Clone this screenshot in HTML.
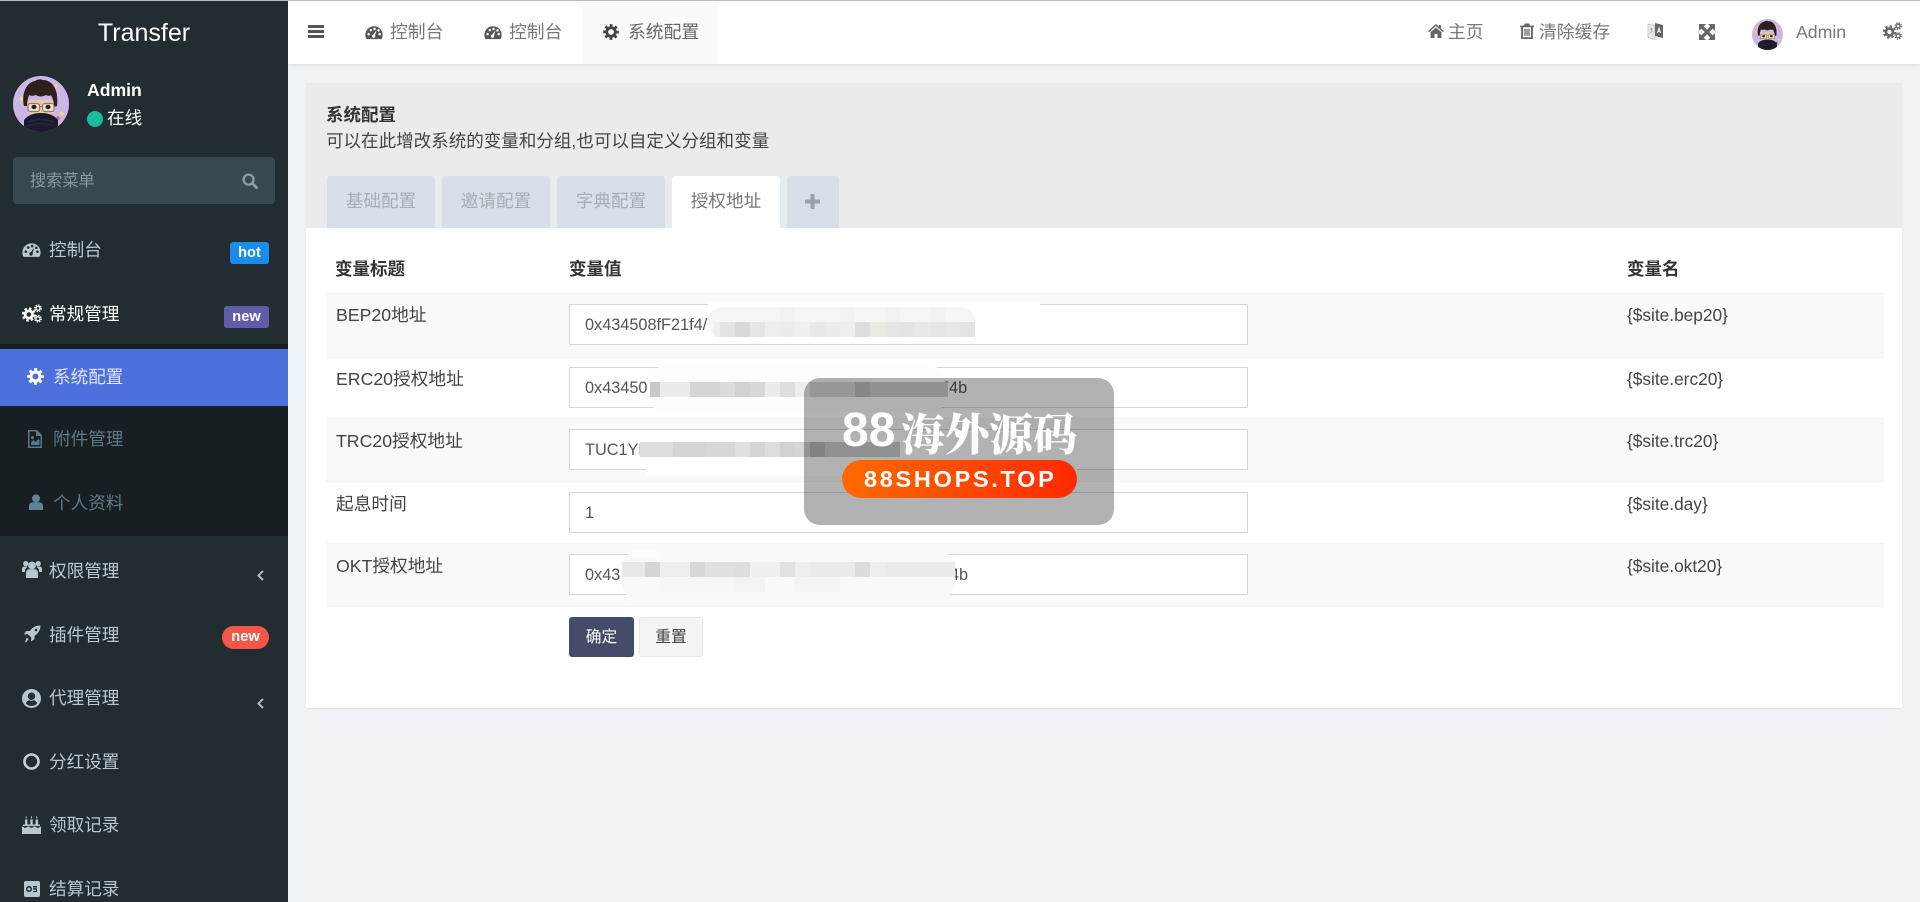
<!DOCTYPE html>
<html lang="zh-CN">
<head>
<meta charset="utf-8">
<title>系统配置</title>
<style>
html,body{margin:0;padding:0;width:1920px;height:902px;overflow:hidden;background:#f0f3f6}
body{position:relative;font-family:"Liberation Sans","Noto Sans CJK SC",sans-serif;font-size:17.5px;color:#444}
.a{position:absolute;display:block}
.t{position:absolute;white-space:nowrap;line-height:20px;height:20px}
.m{font-size:17.6px;color:#b8c7ce}
.s{font-size:17.5px}
svg.i{position:absolute;overflow:visible;fill:currentColor}
.b{position:absolute;color:#fff;font-weight:bold;font-size:14.6px;line-height:22px;height:22px;text-align:center;border-radius:3px}
.tab{position:absolute;top:176px;height:52px;width:108px;background:#d8dfe6;border-radius:3px 3px 0 0;color:#a6aeb4;line-height:51px;text-align:center;font-size:17.6px}
.row{position:absolute;left:326px;width:1558px}
.in{position:absolute;left:569px;width:679px;height:41px;box-sizing:border-box;border:1px solid #d2d6de;background:#fff}
.v{position:absolute;font-size:16.3px;color:#555;line-height:20px;white-space:nowrap}
</style>
</head>
<body>
<svg width="0" height="0" style="position:absolute">
<defs>
<symbol id="dash" viewBox="0 0 20 16"><path fill-rule="evenodd" d="M10 1a9.6 9.6 0 0 0-9.6 9.6c0 1.9.5 3.5 1.3 4.7h16.6c.8-1.2 1.3-2.8 1.3-4.7A9.6 9.6 0 0 0 10 1zM4 8.4a1.4 1.4 0 1 0 .01 0zM6.5 4a1.4 1.4 0 1 0 .01 0zM10.6 2.6a1.4 1.4 0 1 0 .01 0zM15 4.3a1.4 1.4 0 1 0 .01 0zM16.3 8.4a1.4 1.4 0 1 0 .01 0zM12.8 5.6l-3.6 4.6a1.9 1.9 0 1 0 2 1.1z"/></symbol>
<symbol id="gear" viewBox="0 0 20 20"><circle cx="10" cy="10" r="5.4" fill="none" stroke="currentColor" stroke-width="3.6"/><circle cx="10" cy="10" r="8.2" fill="none" stroke="currentColor" stroke-width="3.2" stroke-dasharray="3.4 3.03" stroke-dashoffset="1.7"/></symbol>
<symbol id="cogs" viewBox="0 0 20 18"><circle cx="6.800" cy="10" r="3.700" fill="none" stroke="currentColor" stroke-width="2.800"/><circle cx="6.800" cy="10" r="6" fill="none" stroke="currentColor" stroke-width="2.200" stroke-dasharray="2.500 2.210"/><circle cx="16" cy="3.800" r="2" fill="none" stroke="currentColor" stroke-width="1.300"/><circle cx="16" cy="3.800" r="3.300" fill="none" stroke="currentColor" stroke-width="1.200" stroke-dasharray="1.500 1.090"/><circle cx="16" cy="14.200" r="2" fill="none" stroke="currentColor" stroke-width="1.300"/><circle cx="16" cy="14.200" r="3.300" fill="none" stroke="currentColor" stroke-width="1.200" stroke-dasharray="1.500 1.090"/></symbol>
<symbol id="ava" viewBox="0 0 56 56">
<clipPath id="cc"><circle cx="28" cy="28" r="28"/></clipPath>
<g clip-path="url(#cc)">
<rect width="56" height="56" fill="#cbb6e6"/>
<path d="M7 22l2-2 1 2 2 1-2 1-1 3-1-3-2-1zM47 37l2-2 1 2 2 1-2 1-1 2-1-2-2-1zM42 9l1-1 1 1 1 1-1 1-1 1-1-1-1-1z" fill="#f4dc6a"/>
<path d="M44 40l3 1-1 3-3-1z" fill="#d85a80"/>
<path d="M14 24c0 13 5 20 14 20s14-7 14-20z" fill="#e9c8ac"/>
<path d="M11 30c-3-13 3-24 11-25 2-2 6-2 8-1 9 0 16 9 14 26l-3 1c0-5-1-8-3-12-1 1-3 1-5 0-4 2-7 2-10 0-3 1-5 1-7 0-1 3-2 7-2 11z" fill="#2a211c"/>
<rect x="15" y="27.500" width="11.500" height="8" rx="2.500" fill="#f1e3d2" stroke="#8d7a68" stroke-width="1.200"/>
<rect x="29.500" y="27.500" width="11.500" height="8" rx="2.500" fill="#f1e3d2" stroke="#8d7a68" stroke-width="1.200"/>
<path d="M26.500 30.500h3" stroke="#8d7a68" stroke-width="1"/>
<ellipse cx="21" cy="31" rx="2.600" ry="2.200" fill="#2e211a"/><ellipse cx="35" cy="31" rx="2.600" ry="2.200" fill="#2e211a"/>
<path d="M11 44c4-5 10-7 17-7s13 2 17 7v12H11z" fill="#1b1a2b"/>
<path d="M15 46c8-3 18-3 26 0M14 50c9-3 19-3 28 0" stroke="#2e2d44" stroke-width="1" fill="none"/>
</g></symbol>
</defs>
</svg>

<!-- header -->
<div class="a" style="left:288px;top:0;width:1632px;height:64px;background:#fff;box-shadow:0 1px 3px rgba(0,0,0,.1)"></div>
<div class="a" style="left:582px;top:4px;width:135px;height:60px;background:#fafafa"></div>

<!-- sidebar -->
<div class="a" style="left:0;top:0;width:288px;height:902px;background:#222d32"></div>
<div class="a" style="left:0;top:344px;width:288px;height:5px;background:#171e22"></div>
<div class="a" style="left:0;top:406px;width:288px;height:130px;background:#181f23"></div>
<div class="a" style="left:0;top:349px;width:288px;height:57px;background:#4e70dc"></div>
<div class="a" style="left:0;top:0;width:1920px;height:1px;background:#bcbcbc"></div>

<div class="t" style="left:0;width:288px;text-align:center;top:22px;height:22px;line-height:22px;font-size:25px;color:#fff">Transfer</div>
<svg class="i" style="left:13px;top:76px" width="56" height="56"><use href="#ava"/></svg>
<div class="t" style="left:87px;top:80px;font-weight:bold;font-size:17.6px;color:#fff">Admin</div>
<div class="a" style="left:87px;top:111px;width:16px;height:16px;border-radius:50%;background:#18bc9c"></div>
<div class="t" style="left:107px;top:108px;font-size:17.6px;color:#fff">在线</div>

<div class="a" style="left:13px;top:157px;width:262px;height:47px;border-radius:4px;background:#374850"></div>
<div class="t" style="left:30px;top:171px;font-size:16.2px;color:#8a979e">搜索菜单</div>
<svg class="i" style="left:242px;top:173px;color:#8f9ca3" width="16" height="16" viewBox="0 0 16 16"><circle cx="6.6" cy="6.6" r="5" fill="none" stroke="currentColor" stroke-width="2.3"/><path d="M10.4 10.4l4.2 4.2" stroke="currentColor" stroke-width="2.8" stroke-linecap="round"/></svg>

<svg class="i m" style="left:22px;top:242px;color:#b8c7ce" width="19" height="16"><use href="#dash"/></svg>
<div class="t m" style="left:49px;top:240px">控制台</div>
<div class="b" style="left:230px;top:242px;width:39px;background:#1a8ceb">hot</div>

<svg class="i" style="left:22px;top:304px;color:#fff" width="20" height="19"><use href="#cogs"/></svg>
<div class="t m" style="left:49px;top:304px;color:#fff">常规管理</div>
<div class="b" style="left:224px;top:306px;width:45px;background:#605ca8">new</div>

<svg class="i" style="left:27px;top:368px;color:#fff" width="17" height="17"><use href="#gear"/></svg>
<div class="t s" style="left:53px;top:367px;color:#dfe6f7;font-size:17.6px">系统配置</div>

<svg class="i" style="left:27px;top:430px;color:#5b7a89" width="16" height="18" viewBox="0 0 16 18"><path fill-rule="evenodd" d="M1 0h9l5 5v13H1zM2.5 1.5v15h11V6H9V1.5zM4 15v-2.5l2.5-2.5 2 2 3-3 1 1V15zM5.5 6a1.6 1.6 0 1 0 .01 0z"/></svg>
<div class="t" style="left:53px;top:429px;color:#5b7a89;font-size:17.6px">附件管理</div>

<svg class="i" style="left:29px;top:494px;color:#5f8396" width="14" height="16" viewBox="0 0 14 16"><circle cx="7" cy="4.4" r="4"/><path d="M0 16v-4c0-2.3 1.5-3.8 3.8-3.8h6.4c2.3 0 3.8 1.5 3.8 3.8v4z"/></svg>
<div class="t" style="left:53px;top:493px;color:#5b7a89;font-size:17.6px">个人资料</div>

<svg class="i" style="left:22px;top:560px;color:#b8c7ce" width="20" height="18" viewBox="0 0 20 18"><circle cx="10" cy="5.5" r="3.9"/><circle cx="3.8" cy="3.6" r="2.6"/><circle cx="16.2" cy="3.6" r="2.6"/><path d="M4 18v-5c0-2.5 1.4-3.8 3-3.8h6c1.600 0 3 1.300 3 3.800v5zM0 12V9c0-1.500 1-2.500 2.500-2.500h3L3 9.500V12zM20 12V9c0-1.500-1-2.500-2.500-2.500h-3l2.500 3V12z"/></svg>
<div class="t m" style="left:49px;top:561px">权限管理</div>
<svg class="i" style="left:257px;top:570px;color:#b8c7ce" width="7" height="11" viewBox="0 0 7 11"><path d="M6 1L1.500 5.500 6 10" fill="none" stroke="currentColor" stroke-width="1.900"/></svg>

<svg class="i" style="left:24px;top:625px;color:#b8c7ce" width="17" height="18" viewBox="0 0 17 18"><path fill-rule="evenodd" d="M16.500.5c-4.500 0-8 1.500-10.500 5.500H2L0 9.500l3.800-.4 3.500 3.500-.3 3.800 3.500-2.300V11c3.500-2.500 6-6 6-10.500zM12 3.800a1.300 1.300 0 1 0 .01 0z"/><path d="M2.800 12.500l1.800 1.800L2 17.500l-1-.8z"/></svg>
<div class="t m" style="left:49px;top:625px">插件管理</div>
<div class="b" style="left:222px;top:626px;width:47px;height:23px;border-radius:12px;background:#f6564a">new</div>

<svg class="i" style="left:22px;top:689px;color:#b8c7ce" width="19" height="19" viewBox="0 0 19 19"><path fill-rule="evenodd" d="M9.500 0a9.500 9.500 0 1 0 .01 0zM9.500 3.500a3.700 3.700 0 1 1-.01 0zM3.800 14.200c.9-2 2.400-3 3.700-3 .7.400 1.300.600 2 .600s1.300-.200 2-.600c1.300 0 2.800 1 3.700 3a7.300 7.300 0 0 1-11.400 0z"/></svg>
<div class="t m" style="left:49px;top:688px">代理管理</div>
<svg class="i" style="left:257px;top:698px;color:#b8c7ce" width="7" height="11" viewBox="0 0 7 11"><path d="M6 1L1.500 5.500 6 10" fill="none" stroke="currentColor" stroke-width="1.900"/></svg>

<svg class="i" style="left:23px;top:753px;color:#c3d0d6" width="17" height="17" viewBox="0 0 17 17"><circle cx="8.500" cy="8.500" r="7" fill="none" stroke="currentColor" stroke-width="2.600"/></svg>
<div class="t m" style="left:49px;top:752px">分红设置</div>

<svg class="i" style="left:22px;top:816px;color:#b8c7ce" width="19" height="18" viewBox="0 0 19 18"><path d="M0 10.500c1.600 0 1.600 1.300 3.200 1.300s1.600-1.300 3.100-1.300 1.600 1.300 3.200 1.300 1.600-1.300 3.100-1.300 1.600 1.300 3.200 1.300 1.600-1.300 3.200-1.300V18H0z"/><path d="M3 9.500V3.500h2.400v6zM8.300 9.500V3.500h2.400v6zM13.600 9.500V3.500H16v6zM1 8.500h17V10H1zM4.200 0c.8.800.8 1.900 0 2.900-.8-1-.8-2.100 0-2.900zM9.500 0c.8.800.8 1.900 0 2.900-.8-1-.8-2.100 0-2.900zM14.800 0c.8.800.8 1.900 0 2.900-.8-1-.8-2.100 0-2.900z"/></svg>
<div class="t m" style="left:49px;top:815px">领取记录</div>

<svg class="i" style="left:24px;top:881px;color:#b8c7ce" width="16" height="16" viewBox="0 0 16 16"><path fill-rule="evenodd" d="M2 0h12a2 2 0 0 1 2 2v12a2 2 0 0 1-2 2H2a2 2 0 0 1-2-2V2a2 2 0 0 1 2-2zM5 5a3 3 0 1 0 .01 0zM5 6.500a1.500 1.500 0 1 1-.01 0zM9 5v1.500h4V5zM9 7.300V8.700h3V10H9v1h4V7.300z"/></svg>
<div class="t m" style="left:49px;top:879px">结算记录</div>

<!-- header items -->
<svg class="i" style="left:308px;top:25px;color:#555" width="16" height="13" viewBox="0 0 16 13"><path d="M0 0h16v3H0zM0 5h16v3H0zM0 10h16v3H0z"/></svg>
<svg class="i" style="left:365px;top:25px;color:#555" width="18" height="15"><use href="#dash"/></svg>
<div class="t" style="left:390px;top:22px;color:#777;font-size:17.8px">控制台</div>
<svg class="i" style="left:484px;top:25px;color:#555" width="18" height="15"><use href="#dash"/></svg>
<div class="t" style="left:509px;top:22px;color:#777;font-size:17.8px">控制台</div>
<svg class="i" style="left:603px;top:24px;color:#444" width="16" height="16"><use href="#gear"/></svg>
<div class="t" style="left:628px;top:22px;color:#666;font-size:17.8px">系统配置</div>

<svg class="i" style="left:1428px;top:24px;color:#666" width="16" height="14" viewBox="0 0 16 14"><path d="M8 0l3 2.600V1h2v3.400L16 7l-1 1L8 2 1 8 0 7zM2.500 8.300L8 3.500l5.500 4.800V14H9.500v-4h-3v4h-4z"/></svg>
<div class="t" style="left:1448px;top:22px;color:#777;font-size:17.8px">主页</div>
<svg class="i" style="left:1520px;top:23px;color:#666" width="14" height="16" viewBox="0 0 13 15"><path fill-rule="evenodd" d="M0 2.500h3.500L4.500.5h4l1 2H13V4h-1v11H1V4H0zM2.800 4v9.400h7.400V4zM4 5.500h1.200v6.500H4zM5.900 5.500h1.200v6.500H5.900zM7.800 5.500H9v6.500H7.800z"/></svg>
<div class="t" style="left:1539px;top:22px;color:#777;font-size:17.8px">清除缓存</div>
<svg class="i" style="left:1647px;top:22px" width="17" height="20" viewBox="0 0 17 20"><path d="M1 2l7 1.500v14L1 15.500z" fill="#e8e8e8" stroke="#bbb" stroke-width=".7"/><path d="M8 1l8 2v13l-8-2z" fill="#666"/><path d="M10.500 11l1.500-5 1.500 5M11 9.500h2" fill="none" stroke="#fff" stroke-width=".9"/><path d="M3 7h3M4.500 6v3M3.300 11l2.500-2" stroke="#999" stroke-width=".7" fill="none"/></svg>
<svg class="i" style="left:1699px;top:24px;color:#666" width="16" height="16" viewBox="0 0 16 16"><path d="M0 0h7L0 7zM16 0v7L9 0zM0 16V9l7 7zM16 16H9l7-7z"/><path d="M2.500 2.500l11 11M13.500 2.500l-11 11" stroke="currentColor" stroke-width="3.200"/></svg>
<svg class="i" style="left:1752px;top:19px" width="31" height="31"><use href="#ava"/></svg>
<div class="t" style="left:1796px;top:22px;color:#777;font-size:17.7px">Admin</div>
<svg class="i" style="left:1883px;top:22px;color:#666" width="19" height="18"><use href="#cogs"/></svg>

<!-- panel -->
<div class="a" style="left:306px;top:83px;width:1596px;height:625px;background:#fff;box-shadow:0 1px 1px rgba(0,0,0,.06)"></div>
<div class="a" style="left:306px;top:83px;width:1596px;height:145px;background:#e8ecef"></div>
<div class="t s" style="left:326px;top:105px;font-weight:bold;color:#333">系统配置</div>
<div class="t" style="left:326px;top:131px;color:#444;font-size:17.55px">可以在此增改系统的变量和分组,也可以自定义分组和变量</div>

<div class="tab" style="left:327px">基础配置</div>
<div class="tab" style="left:442px">邀请配置</div>
<div class="tab" style="left:557px">字典配置</div>
<div class="tab" style="left:672px;background:#fff;color:#777">授权地址</div>
<div class="tab" style="left:787px;width:52px"></div>
<svg class="i" style="left:805px;top:194px;color:#99a3ab" width="15" height="15" viewBox="0 0 15 15"><path d="M5.500 0h4v5.500H15v4H9.500V15h-4V9.500H0v-4h5.500z"/></svg>

<!-- table -->
<div class="t s" style="left:335px;top:259px;font-weight:bold;color:#333">变量标题</div>
<div class="t s" style="left:569px;top:259px;font-weight:bold;color:#333">变量值</div>
<div class="t s" style="left:1627px;top:259px;font-weight:bold;color:#333">变量名</div>

<div class="row" style="top:293px;height:64px;background:#f9f9f9;border-top:1px solid #f4f4f4;box-sizing:border-box"></div>
<div class="row" style="top:357px;height:61px;border-top:1px solid #f4f4f4;box-sizing:border-box"></div>
<div class="row" style="top:418px;height:63px;background:#f9f9f9;border-top:1px solid #f4f4f4;box-sizing:border-box"></div>
<div class="row" style="top:481px;height:62px;border-top:1px solid #f4f4f4;box-sizing:border-box"></div>
<div class="row" style="top:543px;height:64px;background:#f9f9f9;border-top:1px solid #f4f4f4;border-bottom:1px solid #f4f4f4;box-sizing:border-box"></div>

<div class="t" style="left:336px;top:305px;font-size:17.7px">BEP20地址</div>
<div class="t" style="left:336px;top:369px;font-size:17.7px">ERC20授权地址</div>
<div class="t" style="left:336px;top:431px;font-size:17.7px">TRC20授权地址</div>
<div class="t" style="left:336px;top:494px;font-size:17.7px">起息时间</div>
<div class="t" style="left:336px;top:556px;font-size:17.7px">OKT授权地址</div>

<div class="in" style="top:304px"></div>
<div class="in" style="top:367px"></div>
<div class="in" style="top:429px"></div>
<div class="in" style="top:492px"></div>
<div class="in" style="top:554px"></div>

<div class="v" style="left:585px;top:315px">0x434508fF21f4/</div>
<div class="v" style="left:585px;top:378px">0x43450</div>
<div class="v" style="left:585px;top:440px">TUC1YF</div>
<div class="v" style="left:585px;top:503px">1</div>
<div class="v" style="left:585px;top:565px">0x43</div>
<div class="v" style="left:940px;top:378px">74b</div>
<div class="v" style="left:950px;top:565px">4b</div>

<div class="t" style="left:1627px;top:305px;font-size:17.3px">{$site.bep20}</div>
<div class="t" style="left:1627px;top:369px;font-size:17.3px">{$site.erc20}</div>
<div class="t" style="left:1627px;top:431px;font-size:17.3px">{$site.trc20}</div>
<div class="t" style="left:1627px;top:494px;font-size:17.3px">{$site.day}</div>
<div class="t" style="left:1627px;top:556px;font-size:17.3px">{$site.okt20}</div>

<div class="a" style="left:569px;top:617px;width:65px;height:40px;border-radius:3px;background:#444c69;color:#fff;text-align:center;line-height:41px;font-size:15.800px">确定</div>
<div class="a" style="left:639px;top:617px;width:64px;height:40px;border-radius:3px;background:#f4f4f4;border:1px solid #e7e7e7;box-sizing:border-box;color:#444;text-align:center;line-height:39px;font-size:15.800px">重置</div>

<!-- redaction mosaic -->
<svg class="a" style="left:0;top:0" width="1920" height="902" viewBox="0 0 1920 902">
<rect x="708" y="302" width="332" height="36" fill="#fff"/>
<rect x="708" y="307" width="267" height="30" rx="14" fill="#f6f6f7"/>
<g fill="#f2f2f3"><rect x="780" y="307" width="15" height="15"/><rect x="840" y="307" width="15" height="15"/><rect x="885" y="307" width="15" height="15"/><rect x="930" y="307" width="15" height="15"/></g>
<g>
<rect x="714" y="322" width="6" height="15" fill="#eeeeee"/><rect x="720" y="322" width="15" height="15" fill="#e3e3e3"/><rect x="735" y="322" width="15" height="15" fill="#d8d9db"/><rect x="750" y="322" width="15" height="15" fill="#e6e6e6"/><rect x="765" y="322" width="15" height="15" fill="#eeeeee"/><rect x="780" y="322" width="15" height="15" fill="#ececec"/><rect x="795" y="322" width="15" height="15" fill="#f0f0f0"/><rect x="810" y="322" width="15" height="15" fill="#e9e9e9"/><rect x="825" y="322" width="15" height="15" fill="#ececec"/><rect x="840" y="322" width="15" height="15" fill="#eeeeee"/><rect x="855" y="322" width="15" height="15" fill="#dddee0"/><rect x="870" y="322" width="15" height="15" fill="#ebebe6"/><rect x="885" y="322" width="15" height="15" fill="#e6e6e6"/><rect x="900" y="322" width="15" height="15" fill="#e4e4e4"/><rect x="915" y="322" width="15" height="15" fill="#e8e8e8"/><rect x="930" y="322" width="15" height="15" fill="#e6e6e6"/><rect x="945" y="322" width="15" height="15" fill="#e8e8e8"/><rect x="960" y="322" width="15" height="15" fill="#e4e4e4"/>
</g>
<rect x="650" y="366" width="295" height="46" rx="14" fill="#fdfdfd"/>
<g>
<rect x="650" y="382" width="10" height="15" fill="#c8c8c8"/><rect x="660" y="382" width="30" height="15" fill="#ebebeb"/><rect x="690" y="382" width="30" height="15" fill="#d5d5d5"/><rect x="720" y="382" width="15" height="15" fill="#dcdcdc"/><rect x="735" y="382" width="15" height="15" fill="#d2d2d2"/><rect x="750" y="382" width="15" height="15" fill="#d8d8d8"/><rect x="765" y="382" width="15" height="15" fill="#ececec"/><rect x="780" y="382" width="15" height="15" fill="#dedede"/><rect x="795" y="382" width="15" height="15" fill="#eeeeee"/><rect x="810" y="382" width="45" height="15" fill="#d8d8d8"/><rect x="855" y="382" width="15" height="15" fill="#c2c2c2"/><rect x="870" y="382" width="78" height="15" fill="#d0d0d0"/>
</g>
<rect x="646" y="440" width="431" height="36" fill="#fff" opacity=".96"/>
<g>
<rect x="640" y="442" width="33" height="15" fill="#dddddd"/><rect x="673" y="442" width="32" height="15" fill="#d5d5d5"/><rect x="705" y="442" width="30" height="15" fill="#d8d8d8"/><rect x="735" y="442" width="15" height="15" fill="#e0e0e0"/><rect x="750" y="442" width="15" height="15" fill="#d5d5d5"/><rect x="765" y="442" width="15" height="15" fill="#dddddd"/><rect x="780" y="442" width="15" height="15" fill="#d2d2d2"/><rect x="795" y="442" width="15" height="15" fill="#d5d5d5"/><rect x="810" y="442" width="15" height="15" fill="#bcbcbc"/><rect x="825" y="442" width="75" height="15" fill="#cfcfcf"/>
</g>
<rect x="622" y="552" width="333" height="46" rx="14" fill="#f9f9fa"/>
<rect x="630" y="550" width="30" height="8" fill="#fbfbfb"/>
<g>
<rect x="622" y="562" width="23" height="15" fill="#e8e8e8"/><rect x="645" y="562" width="15" height="15" fill="#d5d5d5"/><rect x="660" y="562" width="30" height="15" fill="#eeeeee"/><rect x="690" y="562" width="15" height="15" fill="#d8d8d8"/><rect x="705" y="562" width="30" height="15" fill="#e0e0e0"/><rect x="735" y="562" width="15" height="15" fill="#dddee0"/><rect x="750" y="562" width="30" height="15" fill="#f0f0f0"/><rect x="780" y="562" width="15" height="15" fill="#e2e2e2"/><rect x="795" y="562" width="15" height="15" fill="#eeeeee"/><rect x="810" y="562" width="45" height="15" fill="#ebebeb"/><rect x="855" y="562" width="15" height="15" fill="#dcdcdc"/><rect x="870" y="562" width="15" height="15" fill="#eeeeee"/><rect x="885" y="562" width="70" height="15" fill="#ebebeb"/>
<rect x="735" y="577" width="30" height="15" fill="#f3f3f4"/><rect x="660" y="577" width="75" height="15" fill="#f6f6f7"/><rect x="795" y="577" width="45" height="15" fill="#f4f4f5"/>
</g>
</svg>

<!-- watermark -->
<div class="a" style="left:804px;top:378px;width:310px;height:147px;border-radius:16px;background:rgba(0,0,0,.3)"></div>
<div class="t" style="left:842px;top:406px;height:50px;line-height:50px;font-size:48px;font-weight:bold;color:#fff;font-family:'Liberation Sans',sans-serif">88</div>
<div class="t" style="left:901px;top:406px;height:50px;line-height:50px;font-size:44px;font-weight:900;color:#fff;font-family:'Noto Serif CJK SC','Noto Sans CJK SC',serif">海外源码</div>
<div class="a" style="left:842px;top:460px;width:235px;height:38px;border-radius:19px;background:linear-gradient(90deg,#ff6a00,#ff2a00)"></div>
<div class="t" style="left:864px;top:467px;height:24px;line-height:24px;font-size:23.500px;font-weight:bold;letter-spacing:2.700px;color:#fff">88SHOPS.TOP</div>
</body>
</html>
